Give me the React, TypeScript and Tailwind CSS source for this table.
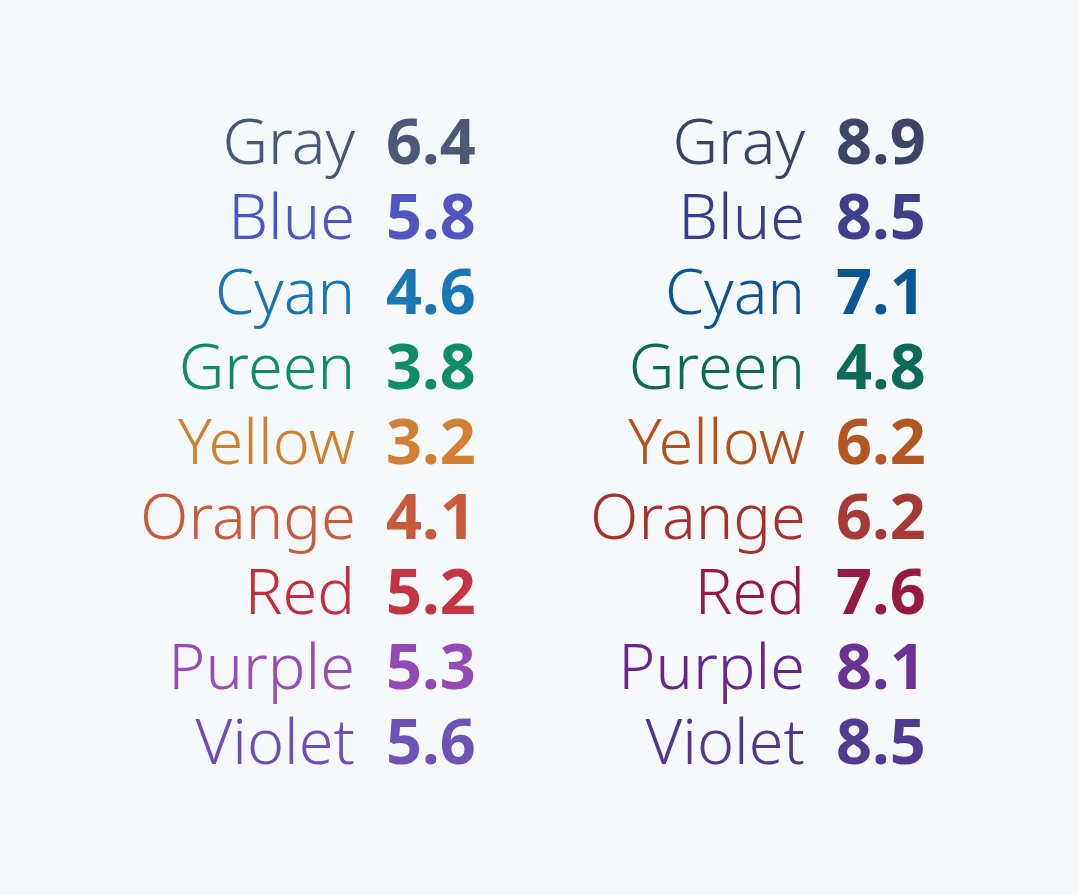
const left = [
  { name: "Gray", value: "6.4", color: "text-[#4a5676]", num: "text-[#4d5877]" },
  { name: "Blue", value: "5.8", color: "text-[#4f54c4]", num: "text-[#5254c2]" },
  { name: "Cyan", value: "4.6", color: "text-[#1774b6]", num: "text-[#1b77b4]" },
  { name: "Green", value: "3.8", color: "text-[#0e8c66]", num: "text-[#0f8c68]" },
  { name: "Yellow", value: "3.2", color: "text-[#d27f2e]", num: "text-[#d07f34]" },
  { name: "Orange", value: "4.1", color: "text-[#c95a3a]", num: "text-[#c85a3e]" },
  { name: "Red", value: "5.2", color: "text-[#c52c3c]", num: "text-[#c43442]" },
  { name: "Purple", value: "5.3", color: "text-[#984db4]", num: "text-[#944ab4]" },
  { name: "Violet", value: "5.6", color: "text-[#6f4db6]", num: "text-[#6e52b6]" },
];

const right = [
  { name: "Gray", value: "8.9", color: "text-[#3a4268]", num: "text-[#3e4468]" },
  { name: "Blue", value: "8.5", color: "text-[#393b8c]", num: "text-[#413f8c]" },
  { name: "Cyan", value: "7.1", color: "text-[#0c5592]", num: "text-[#0e5594]" },
  { name: "Green", value: "4.8", color: "text-[#0b6a56]", num: "text-[#0c6a58]" },
  { name: "Yellow", value: "6.2", color: "text-[#b5521c]", num: "text-[#b3561f]" },
  { name: "Orange", value: "6.2", color: "text-[#a6302c]", num: "text-[#a63a34]" },
  { name: "Red", value: "7.6", color: "text-[#981842]", num: "text-[#961a40]" },
  { name: "Purple", value: "8.1", color: "text-[#67258f]", num: "text-[#6a3292]" },
  { name: "Violet", value: "8.5", color: "text-[#51378f]", num: "text-[#523a90]" },
];

type Row = { name: string; value: string; color: string; num: string };

const Table = ({ rows }: { rows: Row[] }) => (
  <div className="flex flex-col">
    {rows.map((r) => (
      <div key={r.name} className="flex h-[75px] items-center gap-[31px] leading-[75px]">
        <div className={"w-[215px] text-right font-light " + r.color}>{r.name}</div>
        <div className={"w-[90px] font-bold " + r.num}>{r.value}</div>
      </div>
    ))}
  </div>
);

export default function App() {
  return (
    <div
      className="min-h-screen bg-[#f5f9fc] flex justify-center gap-[114px] pt-[102px] pr-[12px] text-[63px]"
      style={{ fontFamily: '"Noto Sans", "Open Sans", sans-serif' }}
    >
      <Table rows={left} />
      <Table rows={right} />
    </div>
  );
}
